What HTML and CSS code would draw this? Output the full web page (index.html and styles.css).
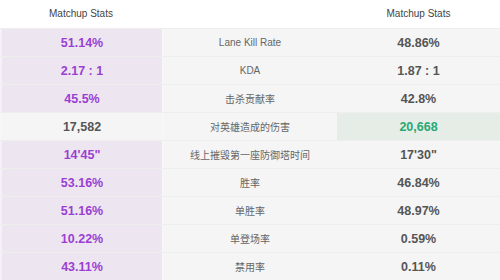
FILE: index.html
```html
<!DOCTYPE html>
<html>
<head>
<meta charset="utf-8">
<link rel="stylesheet" href="styles.css">
</head>
<body>
<div class="stats">
  <div class="row head">
    <div class="cell">Matchup Stats</div>
    <div class="cell"></div>
    <div class="cell">Matchup Stats</div>
  </div>
  <div class="row">
    <div class="cell a">51.14%</div>
    <div class="cell label">Lane Kill Rate</div>
    <div class="cell b">48.86%</div>
  </div>
  <div class="row">
    <div class="cell a">2.17 : 1</div>
    <div class="cell label">KDA</div>
    <div class="cell b">1.87 : 1</div>
  </div>
  <div class="row">
    <div class="cell a">45.5%</div>
    <div class="cell label">击杀贡献率</div>
    <div class="cell b">42.8%</div>
  </div>
  <div class="row">
    <div class="cell b plain">17,582</div>
    <div class="cell label">对英雄造成的伤害</div>
    <div class="cell win">20,668</div>
  </div>
  <div class="row">
    <div class="cell a">14'45"</div>
    <div class="cell label">线上摧毁第一座防御塔时间</div>
    <div class="cell b">17'30"</div>
  </div>
  <div class="row">
    <div class="cell a">53.16%</div>
    <div class="cell label">胜率</div>
    <div class="cell b">46.84%</div>
  </div>
  <div class="row">
    <div class="cell a">51.16%</div>
    <div class="cell label">单胜率</div>
    <div class="cell b">48.97%</div>
  </div>
  <div class="row">
    <div class="cell a">10.22%</div>
    <div class="cell label">单登场率</div>
    <div class="cell b">0.59%</div>
  </div>
  <div class="row">
    <div class="cell a">43.11%</div>
    <div class="cell label">禁用率</div>
    <div class="cell b">0.11%</div>
  </div>
</div>
</body>
</html>
```
FILE: styles.css
```css
html, body {
  margin: 0;
  padding: 0;
  background: #ffffff;
}
body {
  font-family: "Liberation Sans", Arial, "Noto Sans CJK SC", sans-serif;
  width: 500px;
  height: 280px;
  overflow: hidden;
}
.stats {
  display: flex;
  flex-direction: column;
}
.row {
  display: grid;
  grid-template-columns: 162px 175px 163px;
  height: 28px;
  box-sizing: border-box;
  border-top: 1px solid #eeeeee;
}
.row.head {
  border-top: none;
  background: #ffffff;
}
.cell {
  display: flex;
  align-items: center;
  justify-content: center;
  box-sizing: border-box;
}
.head .cell {
  font-size: 10px;
  color: #444444;
  padding-bottom: 1px;
}
.a {
  background: #ede6f1;
  border-left: 2px solid #f5f2f7;
  color: #9a3fd2;
  font-weight: bold;
  font-size: 12.5px;
}
.label {
  background: #f5f5f5;
  border-left: 1px solid #f9f9f9;
  color: #666666;
  font-size: 10px;
  font-family: "Liberation Sans", "Noto Sans CJK SC", sans-serif;
}
.b {
  background: #f5f5f5;
  color: #555555;
  font-weight: bold;
  font-size: 12.5px;
}
.plain {
  border-left: 2px solid #f7f7f7;
}
.win {
  background: #e5ede6;
  color: #28a875;
  font-weight: bold;
  font-size: 12.5px;
}
```
